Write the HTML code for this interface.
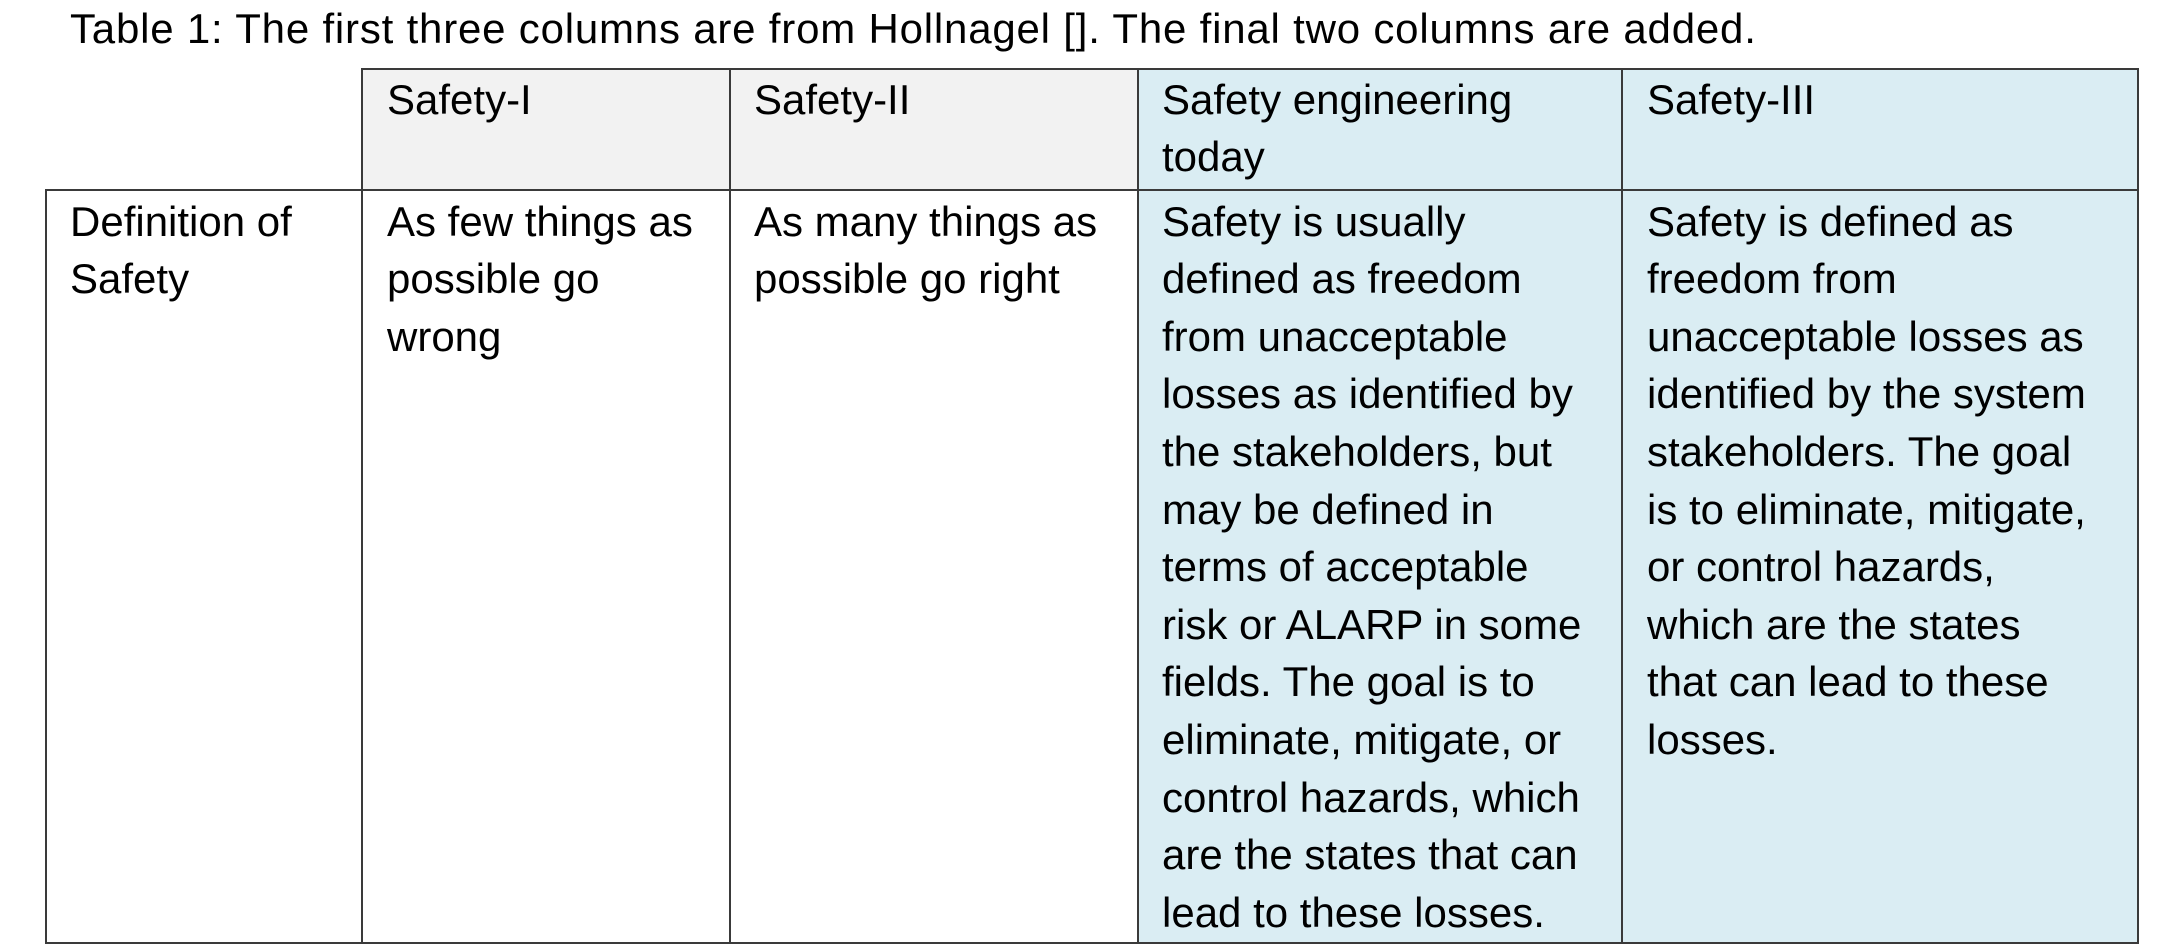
<!DOCTYPE html>
<html><head><meta charset="utf-8"><style>
html,body{margin:0;padding:0;background:#fff;}
body{width:2181px;height:946px;position:relative;overflow:hidden;font-family:"Liberation Sans",sans-serif;font-size:42px;line-height:57.6px;color:#000;}
.c{position:absolute;box-sizing:border-box;}
.t{position:absolute;white-space:nowrap;}
.bl{position:absolute;background:#3a3a3a;}
</style></head><body>
<div class="t" style="left:70px;top:0px;letter-spacing:0.8px;">Table 1: The first three columns are from Hollnagel []. The final two columns are added.</div>

<div class="c" style="left:362px;top:69px;width:368px;height:121px;background:#f2f2f2;"></div>
<div class="c" style="left:730px;top:69px;width:408px;height:121px;background:#f2f2f2;"></div>
<div class="c" style="left:1138px;top:69px;width:1000px;height:875px;background:#daedf3;"></div>

<div class="bl" style="left:361px;top:68px;width:1778px;height:2px;"></div>
<div class="bl" style="left:45px;top:189px;width:2094px;height:2px;"></div>
<div class="bl" style="left:45px;top:942px;width:2094px;height:2px;"></div>
<div class="bl" style="left:45px;top:189px;width:2px;height:755px;"></div>
<div class="bl" style="left:361px;top:68px;width:2px;height:876px;"></div>
<div class="bl" style="left:729px;top:68px;width:2px;height:876px;"></div>
<div class="bl" style="left:1137px;top:68px;width:2px;height:876px;"></div>
<div class="bl" style="left:1621px;top:68px;width:2px;height:876px;"></div>
<div class="bl" style="left:2137px;top:68px;width:2px;height:876px;"></div>

<div class="t" style="left:387px;top:70.6px;">Safety-I</div>
<div class="t" style="left:754px;top:70.6px;">Safety-II</div>
<div class="t" style="left:1162px;top:70.6px;">Safety engineering<br>today</div>
<div class="t" style="left:1647px;top:70.6px;">Safety-III</div>

<div class="t" style="left:70px;top:192.6px;">Definition of<br>Safety</div>
<div class="t" style="left:387px;top:192.6px;">As few things as<br>possible go<br>wrong</div>
<div class="t" style="left:754px;top:192.6px;">As many things as<br>possible go right</div>
<div class="t" style="left:1162px;top:192.6px;">Safety is usually<br>defined as freedom<br>from unacceptable<br>losses as identified by<br>the stakeholders, but<br>may be defined in<br>terms of acceptable<br>risk or ALARP in some<br>fields. The goal is to<br>eliminate, mitigate, or<br>control hazards, which<br>are the states that can<br>lead to these losses.</div>
<div class="t" style="left:1647px;top:192.6px;">Safety is defined as<br>freedom from<br>unacceptable losses as<br>identified by the system<br>stakeholders. The goal<br>is to eliminate, mitigate,<br>or control hazards,<br>which are the states<br>that can lead to these<br>losses.</div>
</body></html>
